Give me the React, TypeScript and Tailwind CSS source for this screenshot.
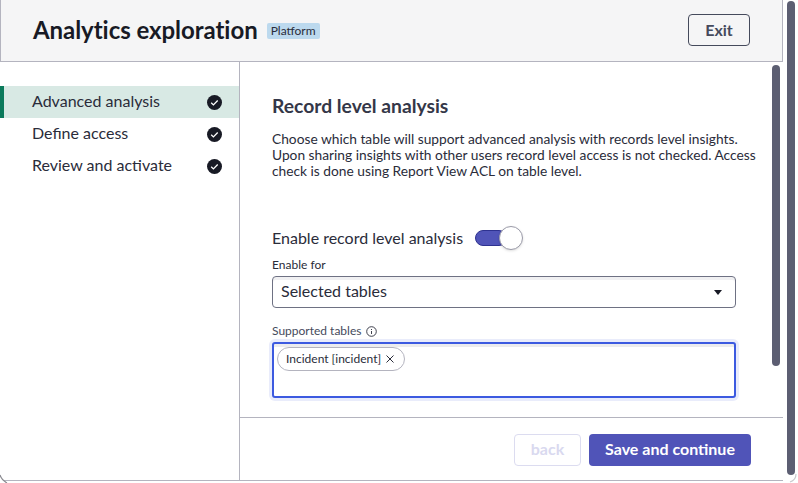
import React from "react";

const Check = () => (
  <svg width="15" height="15" viewBox="0 0 15 15" className="shrink-0">
    <circle cx="7.5" cy="7.5" r="7.5" fill="#181a25" />
    <path d="M4.2 7.8l2.2 2.1 4.3-4.4" fill="none" stroke="#fff" strokeWidth="1.3" />
  </svg>
);

const Step = ({ label, active }: { label: string; active?: boolean }) => (
  <div className={`flex h-8 items-center justify-between pl-[28px] pr-[17px] border-l-[4px] ${active ? "bg-[#d8e9e4] border-[#0b7a5b]" : "border-transparent"}`}>
    <span className="pb-0.5 text-[16px] text-[#2a2c3a]">{label}</span>
    <Check />
  </div>
);

export default function App() {
  return (
    <div className="relative h-[483px] w-[798px] overflow-hidden bg-white font-['Lato',sans-serif] text-[#2a2c3a]">
      <div className="flex h-[481px] w-[783px] flex-col border-b border-[#b4b4bf]">
        <header className="flex h-[62px] shrink-0 items-center justify-between border-b border-l border-r border-[#b4b4bf] bg-[#f5f5f6] pb-[2px] pl-[32px] pr-[32px]">
          <div className="flex items-center gap-[9px]">
            <h1 className="text-[24px] font-bold leading-8 tracking-[-0.05px] text-[#181a25]">Analytics exploration</h1>
            <span className="mt-0.5 rounded-[2px] bg-[#bcd9ee] px-1 text-[12px] leading-4 text-[#2a2c3a]">Platform</span>
          </div>
          <button className="h-8 w-[62px] rounded border border-[#454a5c] text-[16px] font-bold text-[#454a5c]">Exit</button>
        </header>
        <div className="flex min-h-0 flex-1">
          <nav className="w-[240px] shrink-0 border-r border-[#b4b4bf] pt-6">
            <Step label="Advanced analysis" active />
            <Step label="Define access" />
            <Step label="Review and activate" />
          </nav>
          <main className="flex min-w-0 flex-1 flex-col">
            <div className="relative h-[355px] shrink-0 overflow-hidden pl-[32px] pr-4 pt-[32px]">
              <h2 className="text-[19.3px] font-bold leading-6 text-[#343748]">Record level analysis</h2>
              <p className="mt-[13px] w-[487px] text-[13.75px] leading-4 text-[#2a2c3a]">
                Choose which table will support advanced analysis with records level insights. Upon sharing insights with other users record level access is not checked. Access check is done using Report View ACL on table level.
              </p>
              <div className="mt-[47px] flex items-center gap-3">
                <span className="text-[16px] leading-6 text-[#2a2c3a]">Enable record level analysis</span>
                <span className="relative block h-4 w-12">
                  <span className="absolute left-0 top-0 h-4 w-[32px] rounded-full border border-[#2e3290] bg-[#5054b8]" />
                  <span className="absolute right-0 top-[-4px] h-6 w-6 rounded-full border border-[#9a9aa8] bg-white shadow" />
                </span>
              </div>
              <label className="mt-[7px] block text-[12px] leading-4 text-[#2a2c3a]">Enable for</label>
              <div className="mt-[3px] flex h-8 w-[464px] items-center justify-between rounded border border-[#6e7183] bg-white pl-2 pr-[13px] shadow-[inset_0_3px_0_#f0f0f2]">
                <span className="pb-0.5 text-[16px] text-[#2a2c3a]">Selected tables</span>
                <span className="h-0 w-0 border-x-[4px] border-t-[5px] border-x-transparent border-t-[#181a25]" />
              </div>
              <div className="mt-[15px] flex items-center gap-[5px] text-[12px] leading-4 text-[#454a5c]">
                Supported tables
                <svg width="11" height="11" viewBox="0 0 11 11" fill="none" stroke="#2a2c3a" strokeWidth="0.9">
                  <circle cx="5.5" cy="5.5" r="4.8" />
                  <path d="M5.5 5v3M5.5 3v1" />
                </svg>
              </div>
              <div className="mt-[3px] flex h-[56px] w-[464px] items-start rounded-[3px] border-2 border-[#3c5ae0] bg-white p-[3px] shadow-[inset_0_3px_0_#ececee,0_0_0_3px_#e9ecfb]">
                <span className="inline-flex h-6 items-center gap-[5px] rounded-full border border-[#b4b4bf] bg-white pl-2 pr-[10px] text-[12px] text-[#2a2c3a]">
                  Incident [incident]
                  <svg width="8" height="8" viewBox="0 0 8 8" stroke="#2a2c3a" strokeWidth="1">
                    <path d="M.5.5l7 7M7.5.5l-7 7" />
                  </svg>
                </span>
              </div>
              <div className="absolute right-[3px] top-[3px] h-[301px] w-2 rounded-full bg-[#5c5e72]" />
            </div>
            <footer className="flex flex-1 items-center justify-end gap-2 border-t border-[#b4b4bf] pr-[32px] pt-[2px]">
              <button className="h-8 w-[67px] rounded border border-[#dcdcf0] pb-0.5 text-[16px] font-bold text-[#d9d9ef]">back</button>
              <button className="h-8 w-[162px] rounded bg-[#5054b8] pb-0.5 text-[16px] font-bold text-white">Save and continue</button>
            </footer>
          </main>
        </div>
      </div>
      <div className="absolute right-[3px] top-px h-[474px] w-2 rounded-full bg-[#5c5e72]" />
      <svg className="absolute bottom-0 left-0" width="10" height="9" viewBox="0 0 10 9" fill="none">
        <path d="M0 1q1.5 5 7 8H0z" fill="#fff" />
        <path d="M0 1q1.5 5 7 8" stroke="#8a8a90" strokeWidth="1.2" />
      </svg>
      <svg className="absolute bottom-0 right-0" width="10" height="10" viewBox="0 0 10 10" fill="none">
        <path d="M8 1q0 6-6 8" stroke="#c8c8cc" strokeWidth="1.2" />
      </svg>
    </div>
  );
}
